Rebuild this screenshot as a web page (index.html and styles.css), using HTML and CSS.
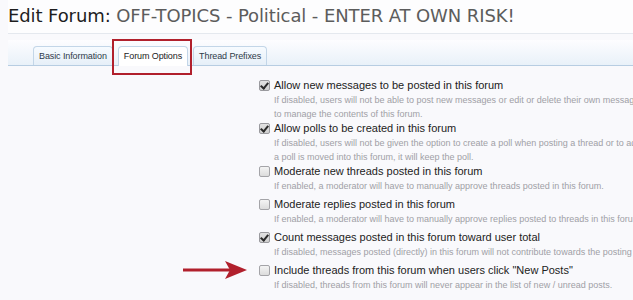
FILE: index.html
```html
<!DOCTYPE html>
<html lang="en">
<head>
    <meta charset="UTF-8">
    <title>Edit Forum</title>
    <link rel="stylesheet" href="styles.css">
</head>
<body>
    <h1 class="title"><span class="title-lead">Edit Forum:</span> OFF-TOPICS - Political - ENTER AT OWN RISK!</h1>

    <!-- Tabs -->
    <div class="tabs">
        <a href="#" class="tab">Basic Information</a>
        <a href="#" class="tab active">Forum Options</a>
        <a href="#" class="tab">Thread Prefixes</a>
    </div>

    <!-- Options -->
    <div class="options">
        <div class="option multi">
            <input type="checkbox" checked>
            <div class="option-text">
                <label>Allow new messages to be posted in this forum</label>
                <p>If disabled, users will not be able to post new messages or edit or delete their own messages in this forum. Moderators will still be able<br>to manage the contents of this forum.</p>
            </div>
        </div>
        <div class="option multi">
            <input type="checkbox" checked>
            <div class="option-text">
                <label>Allow polls to be created in this forum</label>
                <p>If disabled, users will not be given the option to create a poll when posting a thread or to add a poll to an existing thread. If a thread with<br>a poll is moved into this forum, it will keep the poll.</p>
            </div>
        </div>
        <div class="option">
            <input type="checkbox">
            <div class="option-text">
                <label>Moderate new threads posted in this forum</label>
                <p>If enabled, a moderator will have to manually approve threads posted in this forum.</p>
            </div>
        </div>
        <div class="option">
            <input type="checkbox">
            <div class="option-text">
                <label>Moderate replies posted in this forum</label>
                <p>If enabled, a moderator will have to manually approve replies posted to threads in this forum.</p>
            </div>
        </div>
        <div class="option">
            <input type="checkbox" checked>
            <div class="option-text">
                <label>Count messages posted in this forum toward user total</label>
                <p>If disabled, messages posted (directly) in this forum will not contribute towards the posting user's message count.</p>
            </div>
        </div>
        <div class="option">
            <input type="checkbox">
            <div class="option-text">
                <label>Include threads from this forum when users click "New Posts"</label>
                <p>If disabled, threads from this forum will never appear in the list of new / unread posts.</p>
            </div>
        </div>
    </div>

    <!-- Annotations -->
    <div class="highlight"></div>
    <svg class="arrow" width="64" height="18" viewBox="0 0 64 18">
        <rect x="0" y="7.5" width="50" height="3" fill="#b1202c"/>
        <polygon points="42,0 64,9 42,18 47,9" fill="#b1202c"/>
    </svg>
</body>
</html>
```

FILE: styles.css
```css
/* Global */
html {
    overflow: hidden;
    background-color: #f9f9fc;
}

body {
    margin: 0;
    padding: 0 0 0 8px;
    width: 900px;
    background-color: #f9f9fc;
    font-family: 'Liberation Sans', Arial, sans-serif;
    position: relative;
    overflow: hidden;
}

/* Title */
.title {
    margin: 0;
    padding: 5px 0 7px 0;
    font-family: 'DejaVu Sans', sans-serif;
    font-size: 18px;
    font-weight: normal;
    letter-spacing: -0.1px;
    color: #5c5c5c;
    border-bottom: 1px solid #e4e8ee;
    background-color: #fdfdfe;
}

.title-lead {
    color: #1e1e1e;
}

/* Tabs */
.tabs {
    display: flex;
    align-items: flex-end;
    gap: 5px;
    height: 25px;
    margin-top: 6px;
    padding-left: 25px;
    border-bottom: 1px solid #b7cde2;
    background: linear-gradient(#fdfdff, #e9f1f9);
}

.tab {
    display: block;
    padding: 4px 5px 4px 5px;
    font-size: 9px;
    letter-spacing: -0.1px;
    color: #2f3b4a;
    text-decoration: none;
    border: 1px solid #c3d6e8;
    border-bottom: none;
    border-radius: 4px 4px 0 0;
    background: linear-gradient(#f7fbff, #e6eff8);
}

.tab.active {
    background: #ffffff;
    margin-bottom: -1px;
    padding-bottom: 5px;
    color: #222;
}

/* Options */
.options {
    padding: 12px 0 0 251px;
}

.option {
    display: flex;
    align-items: flex-start;
    margin-bottom: 4px;
}

.option.multi {
    margin-bottom: 0;
}

.option input {
    appearance: none;
    position: relative;
    width: 11px;
    height: 11px;
    margin: 2px 4px 0 0;
    border: 1px solid #a4a4a8;
    border-radius: 2px;
    background: linear-gradient(#f4f4f4, #dcdcdc);
}

.option input:checked {
    background: linear-gradient(#e2e2e2, #cfcfcf);
    border-color: #9a9a9e;
}

.option input:checked::after {
    content: "";
    position: absolute;
    left: 2px;
    top: 0px;
    width: 3px;
    height: 6px;
    border: solid #2a2a2a;
    border-width: 0 2px 2px 0;
    transform: rotate(40deg);
}

.option-text label {
    display: block;
    font-size: 11px;
    color: #222;
    white-space: nowrap;
    line-height: 15px;
}

.option-text p {
    margin: 0;
    font-size: 9px;
    color: #a0a0a6;
    white-space: nowrap;
    line-height: 14px;
}

/* Annotations */
.highlight {
    position: absolute;
    left: 112px;
    top: 39px;
    width: 76px;
    height: 32px;
    border: 2px solid #b1202c;
}

.arrow {
    position: absolute;
    left: 183px;
    top: 261px;
}
```
